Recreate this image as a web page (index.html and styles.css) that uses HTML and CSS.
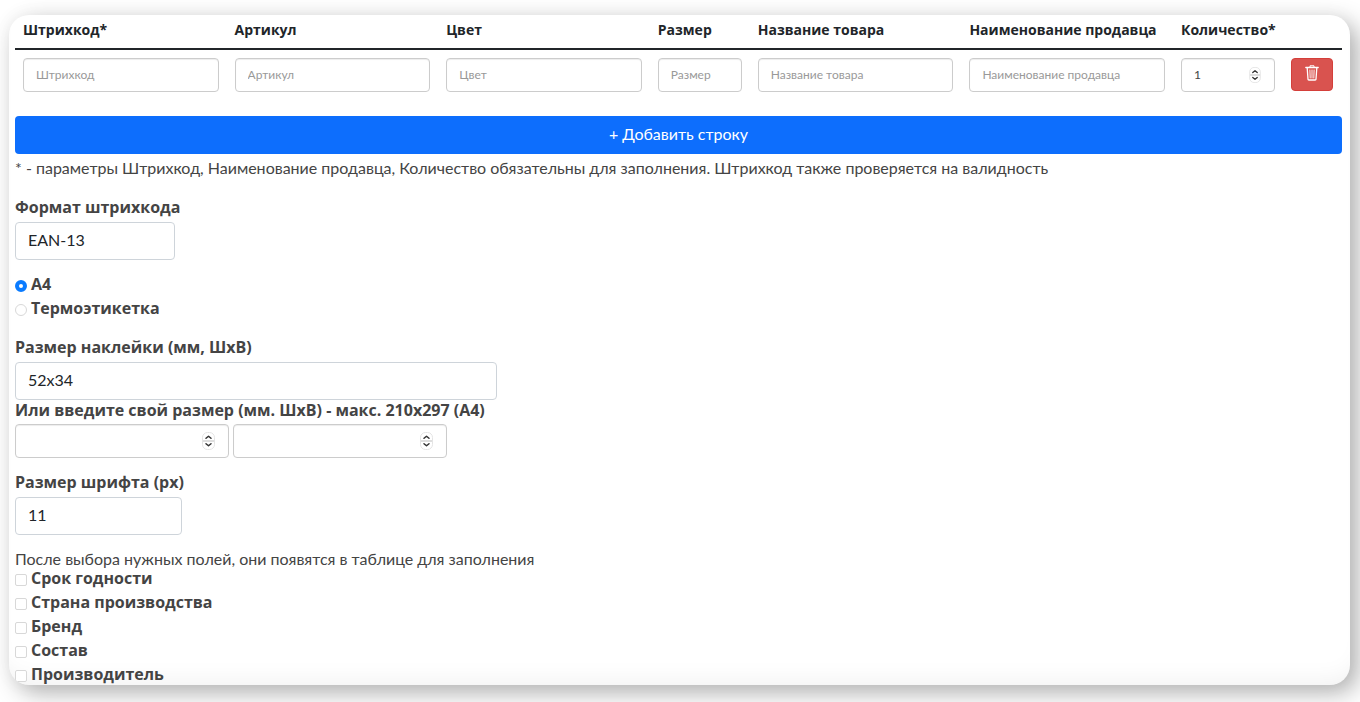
FILE: index.html
```html
<!DOCTYPE html>
<html lang="ru">
<head>
<meta charset="utf-8">
<meta name="viewport" content="width=device-width, initial-scale=1">
<title>Штрихкоды</title>
<link rel="stylesheet" href="styles.css">
</head>
<body>
<svg class="sprite" aria-hidden="true">
  <symbol id="spin" viewBox="0 0 13 18">
    <rect x="0.5" y="0.5" width="12" height="17" rx="5" fill="#fff" stroke="#e4e4e4"/>
    <path d="M1 9h11" stroke="#dedede" stroke-width="2"/>
    <path d="M4 6.3 6.5 4.200 9 6.3M4 11.7 6.5 13.800 9 11.7" fill="none" stroke="#333" stroke-width="1.5" stroke-linecap="round" stroke-linejoin="round"/>
  </symbol>
</svg>
<main class="panel">
  <form>
    <table class="items">
      <colgroup>
        <col><col><col><col class="col-size"><col><col><col class="col-count"><col class="col-action">
      </colgroup>
      <thead>
        <tr>
          <th>Штрихкод*</th><th>Артикул</th><th>Цвет</th><th>Размер</th><th>Название товара</th><th>Наименование продавца</th><th>Количество*</th><th></th>
        </tr>
      </thead>
      <tbody>
        <tr>
          <td><input class="field" type="text" placeholder="Штрихкод" aria-label="Штрихкод"></td>
          <td><input class="field" type="text" placeholder="Артикул" aria-label="Артикул"></td>
          <td><input class="field" type="text" placeholder="Цвет" aria-label="Цвет"></td>
          <td><input class="field" type="text" placeholder="Размер" aria-label="Размер"></td>
          <td><input class="field" type="text" placeholder="Название товара" aria-label="Название товара"></td>
          <td><input class="field" type="text" placeholder="Наименование продавца" aria-label="Наименование продавца"></td>
          <td><span class="number"><input class="field" type="number" value="1" aria-label="Количество"><svg class="spin spin-small"><use href="#spin"/></svg></span></td>
          <td><button class="remove" type="button" aria-label="Удалить строку">
            <svg width="14" height="16" viewBox="0 0 14 16" fill="none" stroke="#fff">
              <path d="M.8 2.500h12.400" stroke-width="1.300" stroke-linecap="round"/>
              <path d="M5 2V.8h4V2" stroke-width="1"/>
              <path d="M2.2 3l.8 11.2c0 .5.4.8.9.8h6.2c.5 0 .9-.3.9-.8L11.800 3" stroke-width="1.300"/>
              <path d="M4.900 5l.3 8M7 5v8M9.100 5l-.3 8" stroke-width=".9" stroke-linecap="round"/>
            </svg>
          </button></td>
        </tr>
      </tbody>
    </table>
    <button class="add" type="button">+ Добавить строку</button>
    <p class="note">* - параметры Штрихкод, Наименование продавца, Количество обязательны для заполнения. Штрихкод также проверяется на валидность</p>

    <div class="group format">
      <label class="title" for="format">Формат штрихкода</label>
      <select class="select" id="format"><option>EAN-13</option></select>
    </div>

    <div class="choices">
      <label class="choice"><input type="radio" name="paper" checked>А4</label>
      <label class="choice"><input type="radio" name="paper">Термоэтикетка</label>
    </div>

    <div class="group sticker">
      <label class="title" for="sticker">Размер наклейки (мм, ШхВ)</label>
      <select class="select" id="sticker"><option>52x34</option></select>
      <label class="title title-own" for="width">Или введите свой размер (мм. ШхВ) - макс. 210х297 (А4)</label>
      <div class="pair">
        <span class="number"><input class="field" id="width" type="number"><svg class="spin"><use href="#spin"/></svg></span>
        <span class="number"><input class="field" type="number" aria-label="Высота"><svg class="spin"><use href="#spin"/></svg></span>
      </div>
    </div>

    <div class="group font">
      <label class="title" for="font">Размер шрифта (px)</label>
      <select class="select" id="font"><option>11</option></select>
    </div>

    <p class="hint">После выбора нужных полей, они появятся в таблице для заполнения</p>
    <div class="choices extras">
      <label class="choice"><input type="checkbox">Срок годности</label>
      <label class="choice"><input type="checkbox">Страна производства</label>
      <label class="choice"><input type="checkbox">Бренд</label>
      <label class="choice"><input type="checkbox">Состав</label>
      <label class="choice"><input type="checkbox">Производитель</label>
    </div>
  </form>
</main>
</body>
</html>
```

FILE: styles.css
```css
* {
  box-sizing: border-box;
}

body {
  margin: 0;
  padding: 15px 10px 17px 9px;
  min-height: 100vh;
  overflow: hidden;
  background: #fff;
  color: #444;
  font: 16px/24px Lato, "Open Sans", sans-serif;
}

input,
select,
button {
  font: inherit;
}

.sprite {
  display: none;
}

.panel {
  padding: 0 8px 0 6px;
  overflow: hidden;
  border-radius: 20px;
  background: #fff;
  box-shadow: 8px 8px 24px rgba(0, 0, 0, .3), 0 0 20px rgba(0, 0, 0, .04), inset 0 -20px 24px -16px rgba(0, 0, 0, .06);
}

.items {
  width: 100%;
  margin-bottom: 16px;
  border-collapse: separate;
  border-spacing: 0;
  table-layout: fixed;
}

.items th,
.title,
.choice {
  font-family: "Open Sans", sans-serif;
  font-weight: 700;
}

.items th {
  height: 35px;
  padding: 0 8px 4px;
  border-bottom: 2px solid #212529;
  color: #212529;
  font-size: 14px;
  line-height: 20px;
  text-align: left;
  white-space: nowrap;
}

.items td {
  padding: 8px;
  vertical-align: top;
}

.col-size {
  width: 100px;
}

.col-count {
  width: 110px;
}

.col-action {
  width: 59px;
}

.field {
  display: block;
  width: 100%;
  height: 34px;
  padding: 5px 12px 7px;
  border: 1px solid #ccc;
  border-radius: 4px;
  background: #fff;
  box-shadow: inset 0 1px 1px rgba(0, 0, 0, .075);
  color: #444;
  font-size: 12px;
  appearance: none;
}

.field::placeholder {
  color: #999;
}

.field[type="number"] {
  appearance: textfield;
}

.number {
  position: relative;
  display: block;
}

.spin {
  position: absolute;
  top: 8px;
  right: 14px;
  width: 13px;
  height: 18px;
  pointer-events: none;
}

.spin-small {
  top: 9px;
  width: 12px;
  height: 16px;
}

.remove {
  display: flex;
  justify-content: center;
  width: 42px;
  height: 33px;
  padding: 6px 0;
  border: 1px solid #d43f3a;
  border-radius: 4px;
  background: #d9534f;
}

.add {
  display: block;
  width: 100%;
  height: 38px;
  padding: 0 0 2px;
  border: 0;
  border-radius: 4px;
  background: #0d6efd;
  color: #fff;
}

.note {
  margin: 2px 0 16px;
}

.group {
  display: flex;
  flex-direction: column;
  width: fit-content;
}

.title {
  padding-bottom: 4px;
  line-height: 22px;
}

.title-own {
  line-height: 20px;
}

.format {
  width: 160px;
  white-space: nowrap;
}

.sticker {
  width: 482px;
  margin-top: 19px;
}

.font {
  width: 167px;
  margin-top: 13px;
  white-space: nowrap;
}

.select {
  width: 100%;
  height: 38px;
  padding: 5px 12px 7px;
  border: 1px solid #ced4da;
  border-radius: 4px;
  background: #fff;
  color: #212529;
  appearance: none;
}

.choices {
  display: flex;
  flex-direction: column;
  gap: 6px;
  margin-top: 15px;
}

.choice {
  display: flex;
  align-items: center;
  gap: 4px;
  width: fit-content;
  line-height: 18px;
}

.choice input {
  width: 12px;
  height: 12px;
  margin: 4px 0 0;
  border: 1px solid #d8d8d8;
  border-radius: 2px;
  background: #fff;
  appearance: none;
}

.choice input[type="radio"] {
  border-radius: 50%;
}

.choice input[type="radio"]:checked {
  border: 4px solid #0a7bff;
}

.pair {
  display: flex;
  gap: 4px;
}

.pair .number {
  width: 214px;
}

.hint {
  margin: 14px 0 0;
  line-height: 20px;
}

.extras {
  margin-top: 0;
  padding-bottom: 2px;
}
```
